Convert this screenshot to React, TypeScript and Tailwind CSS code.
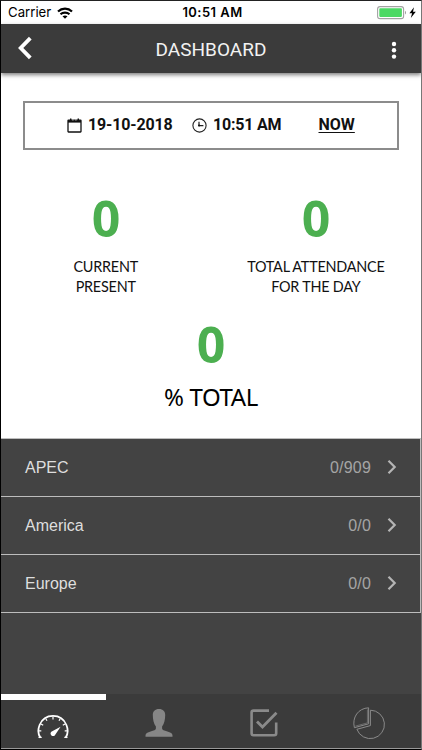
import type { ReactNode } from "react";

const regions = [
    { name: "APEC", count: "0/909" },
    { name: "America", count: "0/0" },
    { name: "Europe", count: "0/0" },
];

function WifiIcon() {
    return (
        <svg width="16" height="12" viewBox="0 0 16 12" fill="none" stroke="#000" strokeWidth="2.2">
            <path d="M1 4.5C5 .7 11 .7 15 4.5" />
            <path d="M3.5 7.3C6 5 10 5 12.5 7.3" />
            <path d="M8 11.8 5.5 9.3C7 8.1 9 8.1 10.5 9.3Z" fill="#000" stroke="none" />
        </svg>
    );
}

function BatteryIcon() {
    return (
        <svg width="40" height="14" viewBox="0 0 40 14">
            <rect x=".6" y=".6" width="26" height="12" rx="2.4" fill="#fff" stroke="#a2a2a2" strokeWidth="1.1" />
            <rect x="2.3" y="2.3" width="22.6" height="8.6" rx=".8" fill="#4cd964" />
            <path d="M28.1 4.7c1.2.4 1.2 3.4 0 3.8z" fill="#8b8b8b" />
            <path d="m37 1.2-4.6 6h2.7l-1.3 4.8 5-6.3H36z" fill="#000" />
        </svg>
    );
}

function CalendarIcon() {
    return (
        <svg width="15" height="15" viewBox="0 0 15 15" fill="none" stroke="#111">
            <rect x="1" y="2.1" width="13" height="11.9" rx=".5" strokeWidth="1.3" />
            <path d="M1 3.4h13" strokeWidth="2.4" />
            <path d="M3.7.4v2.4M11.3.4v2.4" strokeWidth="1.4" />
            <path d="M5.3 2h1.2M8.3 2h1.2" stroke="#fff" strokeWidth=".7" />
        </svg>
    );
}

function ClockIcon() {
    return (
        <svg width="15" height="15" viewBox="0 0 15 15" fill="none" stroke="#222">
            <circle cx="7.5" cy="7.5" r="6.6" strokeWidth="1.1" />
            <path d="M7 3.7v3.9h4.4" strokeWidth="1.2" />
            <circle cx="7.1" cy="7.5" r="1.1" fill="#111" stroke="none" />
        </svg>
    );
}

function GaugeIcon() {
    return (
        <svg width="34" height="26" viewBox="0 0 34 26" fill="none" stroke="#fff">
            <path d="M4.4 23.8C2.3 20.5 1.6 15.8 3.6 11 6 5.1 11 1.9 17 1.9s11 3.2 13.4 9.1c2 4.8 1.3 9.5-.8 12.8" strokeWidth="1.8" />
            <path d="M2.5 23.3h3.2M28.3 23.3h3.2M2.8 16.8h2.5M28.7 16.8h2.5M5 10l2.2 1.2M29 10l-2.2 1.2M9.8 4.8 11 6.7M24.2 4.8 23 6.7M17 2.5v3" strokeWidth="1.2" />
            <path d="m24.6 12.7-5.2 7.7a2.5 2.5 0 1 1-4.1-2.6z" fill="#fff" stroke="none" />
        </svg>
    );
}

function PersonIcon() {
    return (
        <svg width="28" height="28" viewBox="0 0 28 28" fill="#868686">
            <path d="M14 0c4 0 6.2 2.5 6.2 6 0 4.5-1 9-3.1 11.4v2.1c0 1.6 2.1 1.9 5.3 3 3 1 5.1 1.6 5.1 4.1v1.1H.5v-1.1c0-2.5 2.1-3.1 5.1-4.1 3.2-1.1 5.3-1.4 5.3-3v-2.1C8.8 15 7.8 10.5 7.8 6c0-3.5 2.2-6 6.2-6Z" />
        </svg>
    );
}

function CheckIcon() {
    return (
        <svg width="28" height="28" viewBox="0 0 28 28" fill="none" stroke="#8a8a8a">
            <path d="M19 1.6H3.6c-1.2 0-2 .8-2 2v20.6c0 1.2.8 2 2 2h20.6c1.2 0 2-.8 2-2V13.5" strokeWidth="2.6" />
            <path d="m7 12.4 5.5 5.6L26.5 3.7" strokeWidth="2.8" />
        </svg>
    );
}

function PieIcon() {
    return (
        <svg width="32" height="33" viewBox="0 0 32 33" fill="none" stroke="#8a8a8a" strokeWidth="1">
            <path d="M17.4 3.2A14.2 14.2 0 1 1 3.9 22.3L17.4 18.6Z" />
            <path d="M15.6.8v16L1.4 20.7C-1.2 10.3 5.3 1.2 15.6.8Z" />
            <path d="M14.4 2.4v13.5L2.4 19.1" strokeWidth=".6" />
        </svg>
    );
}

function Stat({ label }: { label: ReactNode }) {
    return (
        <div className="flex w-[210px] flex-col items-center">
            <span className="h-[60px] font-['Open_Sans',sans-serif] text-[50px] leading-[60px] font-bold text-[#4caf50]">0</span>
            <p className="mt-[8px] scale-x-[0.93] text-center font-['Lato',sans-serif] text-[15.5px] leading-5 tracking-[-0.25px] whitespace-nowrap text-[#111]">{label}</p>
        </div>
    );
}

export default function App() {
    return (
        <main className="flex h-[750px] w-[422px] flex-col overflow-hidden border-t border-r border-b border-l border-t-[#222] border-r-[#777] border-b-black border-l-black bg-white">
            {/* Status bar */}
            <div className="grid h-[22.5px] shrink-0 grid-cols-3 items-center font-['Inter',sans-serif] text-black">
                <div className="flex items-center gap-[6px] pt-px pl-[7px]">
                    <span className="text-[13.2px]">Carrier</span>
                    <WifiIcon />
                </div>
                <span className="pl-[3px] text-center text-[13px] font-semibold tracking-[0.45px] whitespace-nowrap">10:51 AM</span>
                <div className="flex justify-end pt-px pr-[4px]">
                    <BatteryIcon />
                </div>
            </div>

            {/* Header */}
            <header className="z-10 flex h-[49px] shrink-0 items-center justify-between bg-[#3b3b3b] pt-[3px] pr-[22px] pl-[16px] text-white shadow-[0_2px_4px_rgba(0,0,0,0.5)]">
                <svg className="mb-[3px]" width="16" height="24" viewBox="0 0 16 24" fill="none" stroke="currentColor" strokeWidth="3.8">
                    <path d="M13.3 2.2 3.7 12l9.6 9.8" />
                </svg>
                <h1 className="pt-[2px] font-['Roboto',sans-serif] text-[19px] text-[#f2f2f2]">DASHBOARD</h1>
                <svg width="10" height="20" viewBox="0 0 10 20" fill="currentColor">
                    <circle cx="5" cy="4" r="2.2" />
                    <circle cx="5" cy="10.3" r="2.2" />
                    <circle cx="5" cy="16.6" r="2.2" />
                </svg>
            </header>

            {/* Attendance summary */}
            <section className="h-[365px] shrink-0 pt-[28px]">
                <div className="ml-[22px] flex h-[49px] w-[376px] items-center border-2 border-[#8c8c8c] font-['Roboto',sans-serif] text-[16px] font-bold text-[#111]">
                    <div className="ml-[42px] flex w-[125px] items-center gap-[6px]">
                        <CalendarIcon />
                        <span className="tracking-[-0.15px]">19-10-2018</span>
                    </div>
                    <div className="flex w-[126.5px] items-center gap-[6px]">
                        <ClockIcon />
                        <span className="tracking-[-0.2px]">10:51 AM</span>
                    </div>
                    <span className="underline underline-offset-2">NOW</span>
                </div>

                <div className="mt-[38px] flex">
                    <Stat label={<>CURRENT<br />PRESENT</>} />
                    <Stat label={<>TOTAL ATTENDANCE<br />FOR THE DAY</>} />
                </div>

                <div className="mt-[18px] flex flex-col items-center">
                    <span className="h-[60px] font-['Open_Sans',sans-serif] text-[50px] leading-[60px] font-bold text-[#4caf50]">0</span>
                    <p className="mt-[7px] font-['Noto_Sans',sans-serif] text-[24px] leading-[32px] tracking-[-0.4px] text-black">% TOTAL</p>
                </div>
            </section>

            {/* Regions */}
            <section className="flex-1 bg-[#434343] font-['Liberation_Sans',sans-serif] text-[16px]">
                {regions.map((region) => (
                    <div key={region.name} className="flex h-[58.3px] items-center border-t border-r border-[#bdbdbd] pt-px pr-[23px] pl-[24px]">
                        <span className="flex-1 text-[#dedede]">{region.name}</span>
                        <span className="tracking-[0.2px] text-[#a5a5a5]">{region.count}</span>
                        <svg className="mb-[2px] ml-[16px]" width="10" height="16" viewBox="0 0 10 16" fill="none" stroke="#b5b5b5" strokeWidth="2.2">
                            <path d="m1.5 1.8 6.2 6.2-6.2 6.2" />
                        </svg>
                    </div>
                ))}
                <div className="h-px bg-[#bdbdbd]" />
            </section>

            {/* Tabs */}
            <nav className="grid h-[55px] shrink-0 grid-cols-4 border-b border-[#999] bg-[#3b3b3b]">
                <div className="flex justify-center border-t-[6px] border-white pt-[14px] pr-px">
                    <GaugeIcon />
                </div>
                <div className="flex justify-center pt-[15px]">
                    <PersonIcon />
                </div>
                <div className="flex justify-center pt-[15px]">
                    <CheckIcon />
                </div>
                <div className="flex justify-center pt-[13px]">
                    <PieIcon />
                </div>
            </nav>
        </main>
    );
}
